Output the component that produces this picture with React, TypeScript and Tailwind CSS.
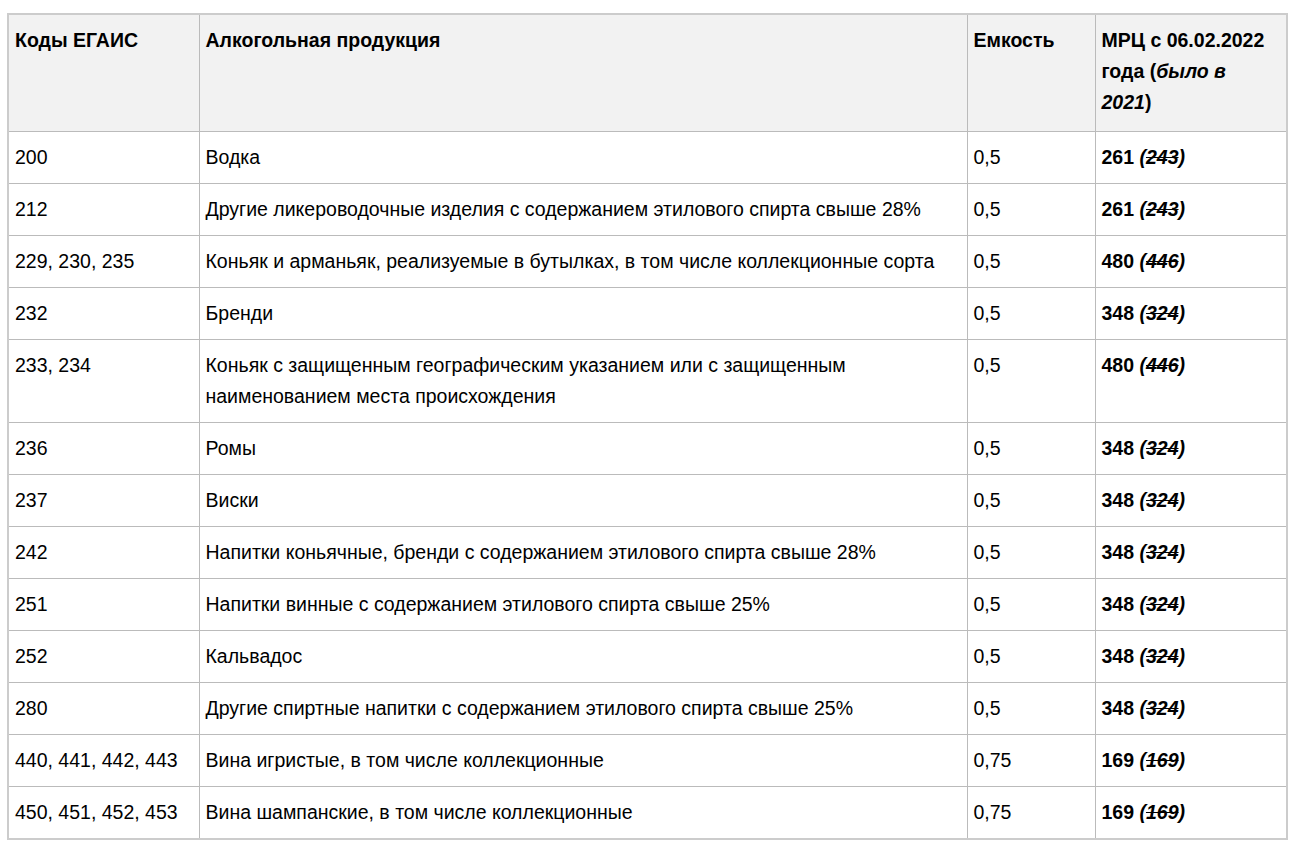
type Row = {
  codes: string;
  name: React.ReactNode;
  volume: string;
  price: string;
  old: string;
};

const rows: Row[] = [
  { codes: "200", name: "Водка", volume: "0,5", price: "261", old: "243" },
  {
    codes: "212",
    name: "Другие ликероводочные изделия с содержанием этилового спирта свыше 28%",
    volume: "0,5",
    price: "261",
    old: "243",
  },
  {
    codes: "229, 230, 235",
    name: "Коньяк и арманьяк, реализуемые в бутылках, в том числе коллекционные сорта",
    volume: "0,5",
    price: "480",
    old: "446",
  },
  { codes: "232", name: "Бренди", volume: "0,5", price: "348", old: "324" },
  {
    codes: "233, 234",
    name: (
      <>
        Коньяк с защищенным географическим указанием или с защищенным
        <br />
        наименованием места происхождения
      </>
    ),
    volume: "0,5",
    price: "480",
    old: "446",
  },
  { codes: "236", name: "Ромы", volume: "0,5", price: "348", old: "324" },
  { codes: "237", name: "Виски", volume: "0,5", price: "348", old: "324" },
  {
    codes: "242",
    name: "Напитки коньячные, бренди с содержанием этилового спирта свыше 28%",
    volume: "0,5",
    price: "348",
    old: "324",
  },
  {
    codes: "251",
    name: "Напитки винные с содержанием этилового спирта свыше 25%",
    volume: "0,5",
    price: "348",
    old: "324",
  },
  { codes: "252", name: "Кальвадос", volume: "0,5", price: "348", old: "324" },
  {
    codes: "280",
    name: "Другие спиртные напитки с содержанием этилового спирта свыше 25%",
    volume: "0,5",
    price: "348",
    old: "324",
  },
  {
    codes: "440, 441, 442, 443",
    name: "Вина игристые, в том числе коллекционные",
    volume: "0,75",
    price: "169",
    old: "169",
  },
  {
    codes: "450, 451, 452, 453",
    name: "Вина шампанские, в том числе коллекционные",
    volume: "0,75",
    price: "169",
    old: "169",
  },
];

const cell = "border border-[#bbbbbb] px-[6px] py-[10px] align-top";

export default function App() {
  return (
    <div
      className="min-h-screen bg-white pl-[7px] pt-[13px] text-[19.5px] leading-[31px] text-black"
      style={{ fontFamily: '"Liberation Sans", Arial, sans-serif' }}
    >
      <table className="w-[1279px] table-fixed border-collapse border-2 border-[#cccccc]">
        <colgroup>
          <col className="w-[191px]" />
          <col className="w-[768px]" />
          <col className="w-[128px]" />
          <col className="w-[192px]" />
        </colgroup>
        <thead>
          <tr className="bg-[#f2f2f2] text-left font-bold">
            <th className={`${cell} h-[117px]`}>Коды ЕГАИС</th>
            <th className={cell}>Алкогольная продукция</th>
            <th className={cell}>Емкость</th>
            <th className={cell}>
              МРЦ с 06.02.2022 года (<i>было в 2021</i>)
            </th>
          </tr>
        </thead>
        <tbody>
          {rows.map((r) => (
            <tr key={r.codes}>
              <td className={cell}>{r.codes}</td>
              <td className={cell}>{r.name}</td>
              <td className={cell}>{r.volume}</td>
              <td className={cell}>
                <b>
                  {r.price}{" "}
                  <i>
                    (<s>{r.old}</s>)
                  </i>
                </b>
              </td>
            </tr>
          ))}
        </tbody>
      </table>
    </div>
  );
}
